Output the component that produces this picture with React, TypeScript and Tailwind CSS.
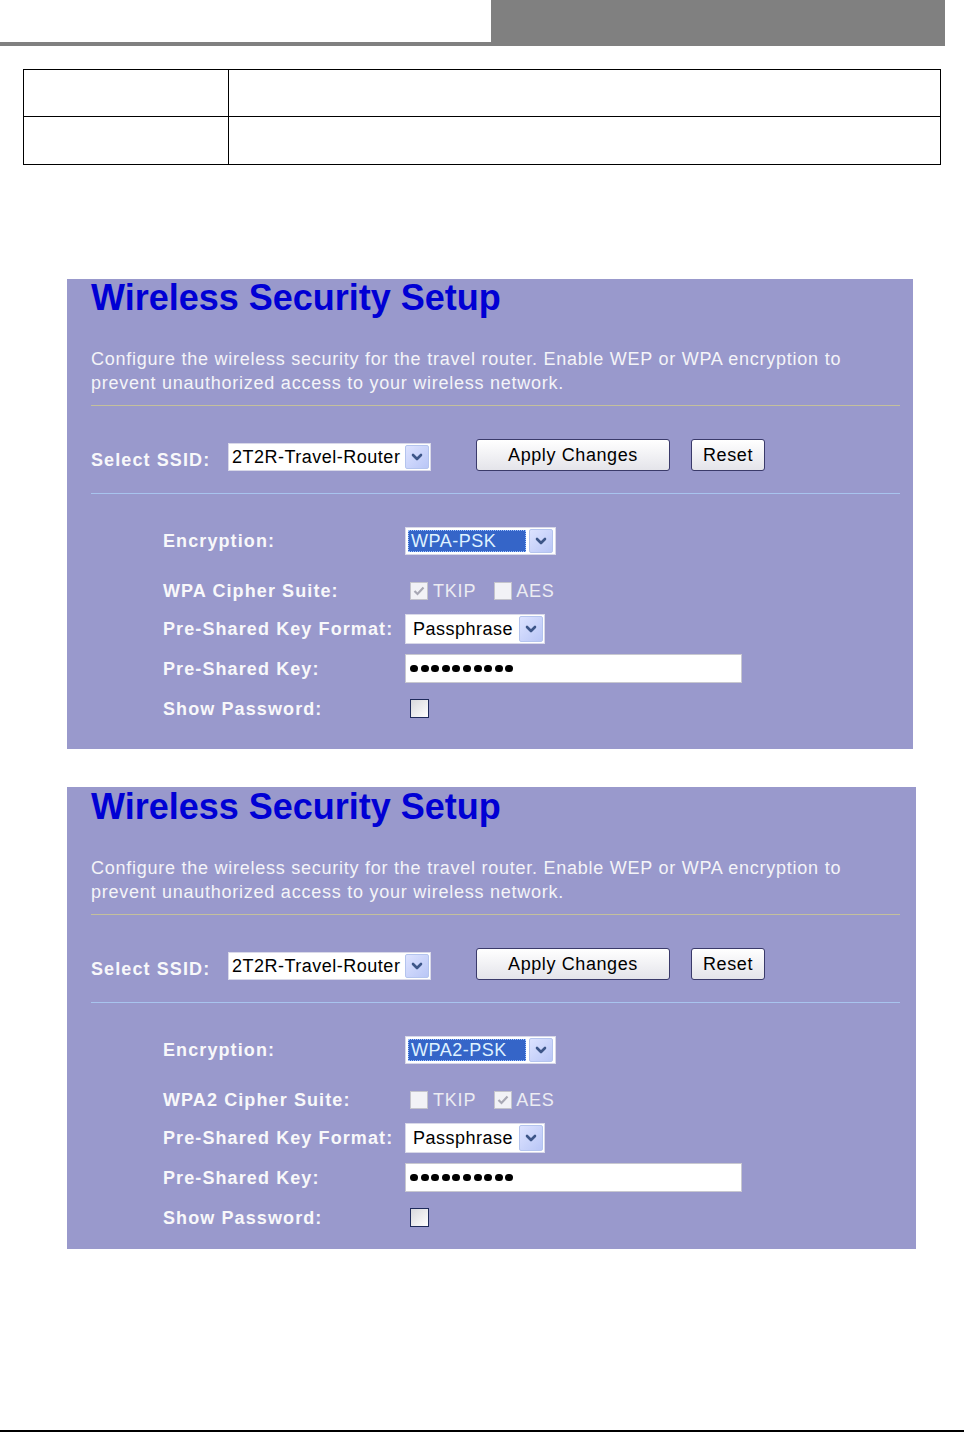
import React from "react";

const font = { fontFamily: '"Liberation Sans", Arial, sans-serif' };

function Arrow() {
  return (
    <div className="flex h-full w-[24px] items-center justify-center rounded-[2px] border border-[#b4c4ee] bg-gradient-to-br from-[#dde3ff] to-[#b9c6f6]">
      <svg width="12" height="8" viewBox="0 0 12 8">
        <polyline points="2,2 6,6 10,2" fill="none" stroke="#3d5688" strokeWidth="2.6" strokeLinecap="round" strokeLinejoin="round" />
      </svg>
    </div>
  );
}

function Select({ text, w, h, textClass }: { text: string; w: string; h: string; textClass?: string }) {
  return (
    <div className={`flex items-center justify-between bg-white border border-[#d8d8e8] pl-[3px] pr-[1px] py-[1px] ${w} ${h}`}>
      <span className={`text-[18px] tracking-[0.5px] text-black leading-none ${textClass ?? ""}`}>{text}</span>
      <Arrow />
    </div>
  );
}

function EncSelect({ text }: { text: string }) {
  return (
    <div className="flex h-[28px] w-[151px] items-center gap-[3px] bg-white border border-[#d8d8e8] p-[2px]">
      <div className="flex h-full w-[120px] items-center bg-[#3565c8] border border-dotted border-[#9cc0ff] pl-[2px]">
        <span className="text-[18px] leading-none tracking-[0.5px] text-[#dff2ff]">{text}</span>
      </div>
      <div className="h-[24px]">
        <Arrow />
      </div>
    </div>
  );
}

function CheckBox({ checked }: { checked: boolean }) {
  return (
    <div className="flex h-[18px] w-[18px] items-center justify-center border border-[#c4c4cc] bg-[#f2f2f6]">
      {checked && (
        <svg width="12" height="10" viewBox="0 0 12 10">
          <polyline points="1.5,5 4.5,8 10.5,1.5" fill="none" stroke="#a8a8b4" strokeWidth="2.2" />
        </svg>
      )}
    </div>
  );
}

function Label({ children }: { children: React.ReactNode }) {
  return (
    <div className="w-[242px] text-[18px] font-bold tracking-[1.1px] text-[#f8f8fa] leading-none">{children}</div>
  );
}

function Panel({ width, height, enc, cipherLabel, tkip, aes, extraTop, pr }: {
  width: string;
  height: string;
  enc: string;
  cipherLabel: string;
  tkip: boolean;
  aes: boolean;
  extraTop: string;
  pr: string;
}) {
  return (
    <div className={`bg-[#9999cc] ml-[67px] ${width} ${height} pl-[24px] ${pr} flex flex-col`}>
      <div className={`${extraTop} h-[38px] text-[36px] leading-[38px] font-bold text-[#0000d4]`}>Wireless Security Setup</div>
      <div className="mt-[30px] text-[18px] leading-[24px] tracking-[0.75px] text-[#f4f4f8]">
        Configure the wireless security for the travel router. Enable WEP or WPA encryption to
        <br />
        prevent unauthorized access to your wireless network.
      </div>
      <div className="mt-[10px] h-[1px] bg-[#c4c09c]" />
      <div className="mt-[33px] flex h-[32px] items-end">
        <div className="mb-[2px] w-[137px] text-[18px] font-bold tracking-[1.1px] text-[#f8f8fa] leading-none">Select SSID:</div>
        <Select text="2T2R-Travel-Router" w="w-[203px]" h="h-[28px]" />
        <div className="ml-[45px] flex h-[32px] w-[194px] items-center justify-center rounded-[3px] border border-[#3a3a6a] bg-gradient-to-b from-[#ffffff] to-[#e4e4ea] text-[18px] tracking-[0.6px] text-black">
          Apply Changes
        </div>
        <div className="ml-[21px] flex h-[32px] w-[74px] items-center justify-center rounded-[3px] border border-[#3a3a6a] bg-gradient-to-b from-[#ffffff] to-[#e4e4ea] text-[18px] tracking-[0.6px] text-black">
          Reset
        </div>
      </div>
      <div className="mt-[22px] h-[1px] bg-[#a8c4ee]" />
      <div className="pl-[72px] flex flex-col">
        <div className="mt-[33px] flex h-[28px] items-center">
          <Label>Encryption:</Label>
          <EncSelect text={enc} />
        </div>
        <div className="mt-[23px] flex h-[26px] items-center">
          <Label>{cipherLabel}</Label>
          <div className="ml-[5px] flex items-center">
            <CheckBox checked={tkip} />
            <span className="ml-[5px] text-[18px] tracking-[0.8px] leading-none text-[#ececf2]">TKIP</span>
            <div className="ml-[18px]">
              <CheckBox checked={aes} />
            </div>
            <span className="ml-[4px] text-[18px] tracking-[0.8px] leading-none text-[#ececf2]">AES</span>
          </div>
        </div>
        <div className="mt-[10px] flex h-[30px] items-center">
          <Label>Pre-Shared Key Format:</Label>
          <Select text="Passphrase" w="w-[140px]" h="h-[30px]" textClass="pl-[4px]" />
        </div>
        <div className="mt-[10px] flex h-[29px] items-center">
          <Label>Pre-Shared Key:</Label>
          <div className="flex h-[29px] w-[337px] items-center gap-[2.6px] bg-white border border-[#c8c8d0] pl-[4px]">
            {Array.from({ length: 10 }).map((_, i) => (
              <div key={i} className="h-[7px] w-[8px] rounded-full bg-black" />
            ))}
          </div>
        </div>
        <div className="mt-[14px] flex h-[23px] items-center">
          <Label>Show Password:</Label>
          <div className="ml-[5px] h-[19px] w-[19px] border border-[#1e2a5a] bg-gradient-to-br from-[#d8d8dc] to-[#ffffff]" />
        </div>
      </div>
    </div>
  );
}

export default function App() {
  return (
    <div style={font} className="relative flex h-[1433px] w-[964px] flex-col bg-white">
      <div className="flex h-[46px]">
        <div className="w-[491px] border-b-[4px] border-[#808080]" />
        <div className="w-[454px] bg-[#808080]" />
      </div>
      <div className="ml-[23px] mt-[23px] w-[918px] border border-black">
        <div className="flex h-[47px] border-b border-black">
          <div className="w-[205px] border-r border-black" />
          <div className="flex-1" />
        </div>
        <div className="flex h-[47px]">
          <div className="w-[205px] border-r border-black" />
          <div className="flex-1" />
        </div>
      </div>
      <div className="mt-[114px]">
        <Panel width="w-[846px]" height="h-[470px]" enc="WPA-PSK" cipherLabel="WPA Cipher Suite:" tkip={true} aes={false} extraTop="mt-0" pr="pr-[13px]" />
      </div>
      <div className="mt-[38px]">
        <Panel width="w-[849px]" height="h-[462px]" enc="WPA2-PSK" cipherLabel="WPA2 Cipher Suite:" tkip={false} aes={true} extraTop="mt-[1px]" pr="pr-[16px]" />
      </div>
      <div className="mt-auto mb-[1px] h-[2px] w-full bg-black" />
    </div>
  );
}
